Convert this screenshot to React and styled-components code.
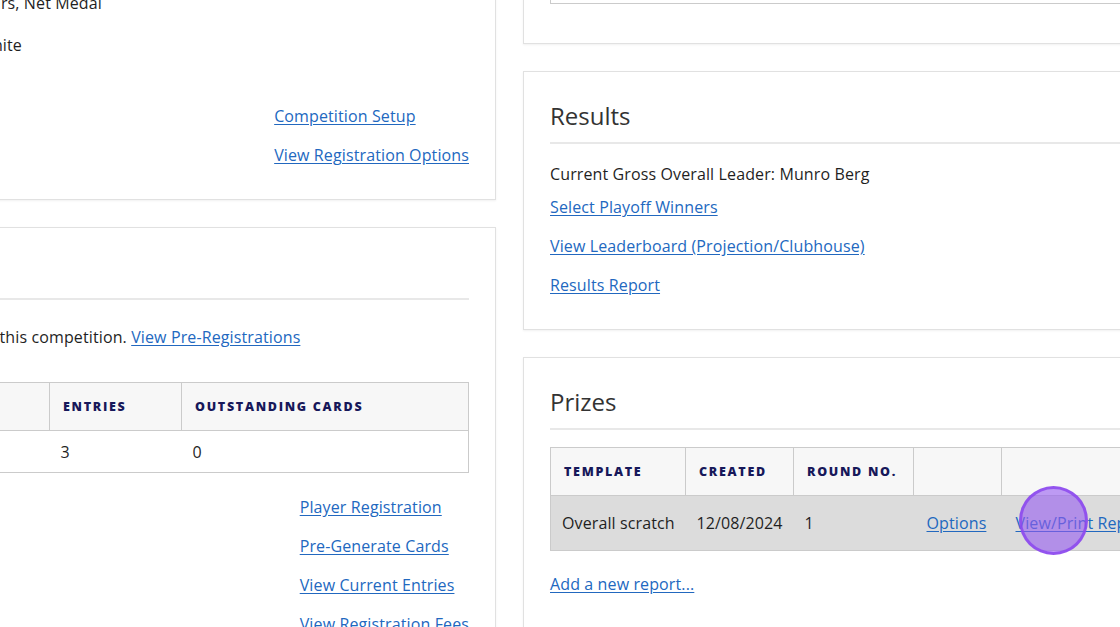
import React from "react";
import styled, { createGlobalStyle } from "styled-components";

const GlobalStyle = createGlobalStyle`
  html, body { margin: 0; padding: 0; background: #ffffff; }
  body {
    font-family: "Open Sans", "Noto Sans", "Liberation Sans", sans-serif;
    color: #1f1f1f;
    font-size: 16px;
    letter-spacing: 0.12px;
    overflow: hidden;
  }
  * { box-sizing: border-box; }
`;

const Viewport = styled.div`
  position: relative;
  width: 1120px;
  height: 627px;
  overflow: hidden;
  background: #fff;
`;

const Columns = styled.div`
  display: grid;
  grid-template-columns: 620px 700px;
  column-gap: 27px;
  align-items: start;
  margin-left: -124px;
  margin-top: -192px;
`;

const Column = styled.div`
  display: flex;
  flex-direction: column;
  gap: 27px;
`;

const Card = styled.section`
  display: flex;
  flex-direction: column;
  background: #fff;
  border: 1px solid #e1e1e1;
  box-shadow: 0 1px 2px rgba(0, 0, 0, 0.06);
  padding: 26px 26px 31px;
`;

const CardTitle = styled.h2`
  margin: 0;
  font-size: 24px;
  line-height: 36px;
  font-weight: 400;
  letter-spacing: 0;
  color: #333;
`;

const Rule = styled.hr`
  border: none;
  border-top: 2px solid #e8e8e8;
  margin: 8px 0 17px;
  width: 100%;
`;

const DetailRow = styled.div`
  display: grid;
  grid-template-columns: 75px 1fr;
  padding: 8px 0;
  line-height: 26px;
  font-size: 16px;
`;

const DetailLabel = styled.span`
  font-weight: 600;
  color: #333;
`;

const Text = styled.p`
  margin: ${(p) => p.$margin || "0"};
  font-size: 16px;
  line-height: 26px;
  color: #1f1f1f;
`;

const LinkList = styled.div`
  display: flex;
  flex-direction: column;
  align-items: flex-start;
  gap: 13px;
  margin-top: ${(p) => p.$top || 0}px;
  align-self: ${(p) => (p.$end ? "flex-end" : "flex-start")};
`;

const Link = styled.a`
  color: #2268bf;
  text-decoration: underline;
  text-underline-offset: 2px;
  font-size: 16px;
  line-height: 26px;
  cursor: pointer;
  white-space: nowrap;
`;

const Table = styled.table`
  width: 100%;
  table-layout: fixed;
  border-collapse: collapse;
  border: 1px solid #cbcbcb;
  margin-bottom: ${(p) => p.$bottom || 0}px;
`;

const HeadCell = styled.th`
  height: 48px;
  padding: 0 13px;
  text-align: left;
  background: #f7f7f7;
  border-right: 1px solid #cbcbcb;
  border-bottom: 1px solid #cbcbcb;
  font-size: 12.5px;
  font-weight: 800;
  letter-spacing: 1.7px;
  text-transform: uppercase;
  color: #17185a;
  white-space: nowrap;
  &:last-child { border-right: none; }
`;

const BodyRow = styled.tr`
  background: ${(p) => (p.$highlight ? "#dcdcdc" : "#ffffff")};
`;

const Cell = styled.td`
  height: ${(p) => p.$h || 42}px;
  padding: 0 ${(p) => p.$pad ?? 11}px;
  font-size: 16px;
  color: #1f1f1f;
  white-space: nowrap;
  overflow: visible;
`;

const ClickMarker = styled.div`
  position: absolute;
  left: 1019px;
  top: 486px;
  width: 69px;
  height: 69px;
  border-radius: 50%;
  background: rgba(150, 92, 240, 0.6);
  border: 3px solid rgba(140, 72, 238, 0.85);
  pointer-events: none;
`;

export default function App() {
  return (
    <>
      <GlobalStyle />
      <Viewport>
        <Columns>
          <Column>
            <Card>
              <CardTitle>Competition Details</CardTitle>
              <Rule />
              <DetailRow>
                <DetailLabel>Date</DetailLabel>
                <span>12/08/2024</span>
              </DetailRow>
              <DetailRow>
                <DetailLabel>Rounds</DetailLabel>
                <span>1</span>
              </DetailRow>
              <DetailRow>
                <DetailLabel>Format</DetailLabel>
                <span>Pairs, Net Medal</span>
              </DetailRow>
              <DetailRow>
                <DetailLabel>Tees</DetailLabel>
                <span>White</span>
              </DetailRow>
              <LinkList $end $top={37}>
                <Link>Competition Setup</Link>
                <Link>View Registration Options</Link>
              </LinkList>
            </Card>

            <Card>
              <CardTitle>Entries</CardTitle>
              <Rule />
              <Text $margin="7px 0 32px">
                3 entries for this competition. <Link>View Pre-Registrations</Link>
              </Text>
              <Table>
                <colgroup>
                  <col style={{ width: 146 }} />
                  <col style={{ width: 132 }} />
                  <col />
                </colgroup>
                <thead>
                  <tr>
                    <HeadCell>Division</HeadCell>
                    <HeadCell>Entries</HeadCell>
                    <HeadCell>Outstanding Cards</HeadCell>
                  </tr>
                </thead>
                <tbody>
                  <BodyRow>
                    <Cell>Overall</Cell>
                    <Cell>3</Cell>
                    <Cell>0</Cell>
                  </BodyRow>
                </tbody>
              </Table>
              <LinkList $end $top={21}>
                <Link>Player Registration</Link>
                <Link>Pre-Generate Cards</Link>
                <Link>View Current Entries</Link>
                <Link>View Registration Fees</Link>
              </LinkList>
            </Card>
          </Column>

          <Column>
            <Card>
              <CardTitle>Tee Times</CardTitle>
              <Rule />
              <Table $bottom={8}>
                <thead>
                  <tr>
                    <HeadCell>Round</HeadCell>
                    <HeadCell>Start</HeadCell>
                    <HeadCell>Interval</HeadCell>
                    <HeadCell></HeadCell>
                  </tr>
                </thead>
                <tbody>
                  <BodyRow>
                    <Cell $h={57}>1</Cell>
                    <Cell $h={57}>08:00</Cell>
                    <Cell $h={57}>10 min</Cell>
                    <Cell $h={57}>
                      <Link>Edit</Link>
                    </Cell>
                  </BodyRow>
                </tbody>
              </Table>
            </Card>

            <Card>
              <CardTitle>Results</CardTitle>
              <Rule />
              <Text>Current Gross Overall Leader: Munro Berg</Text>
              <LinkList $top={7}>
                <Link>Select Playoff Winners</Link>
                <Link>View Leaderboard (Projection/Clubhouse)</Link>
                <Link>Results Report</Link>
              </LinkList>
            </Card>

            <Card>
              <CardTitle>Prizes</CardTitle>
              <Rule />
              <Table>
                <colgroup>
                  <col style={{ width: 135 }} />
                  <col style={{ width: 108 }} />
                  <col style={{ width: 120 }} />
                  <col style={{ width: 88 }} />
                  <col />
                </colgroup>
                <thead>
                  <tr>
                    <HeadCell>Template</HeadCell>
                    <HeadCell>Created</HeadCell>
                    <HeadCell>Round No.</HeadCell>
                    <HeadCell></HeadCell>
                    <HeadCell></HeadCell>
                  </tr>
                </thead>
                <tbody>
                  <BodyRow $highlight>
                    <Cell $h={55}>Overall scratch</Cell>
                    <Cell $h={55}>12/08/2024</Cell>
                    <Cell $h={55}>1</Cell>
                    <Cell $h={55} $pad={13}>
                      <Link>Options</Link>
                    </Cell>
                    <Cell $h={55} $pad={14}>
                      <Link>View/Print Report</Link>
                    </Cell>
                  </BodyRow>
                </tbody>
              </Table>
              <LinkList $top={20}>
                <Link>Add a new report...</Link>
              </LinkList>
            </Card>
          </Column>
        </Columns>
        <ClickMarker />
      </Viewport>
    </>
  );
}
